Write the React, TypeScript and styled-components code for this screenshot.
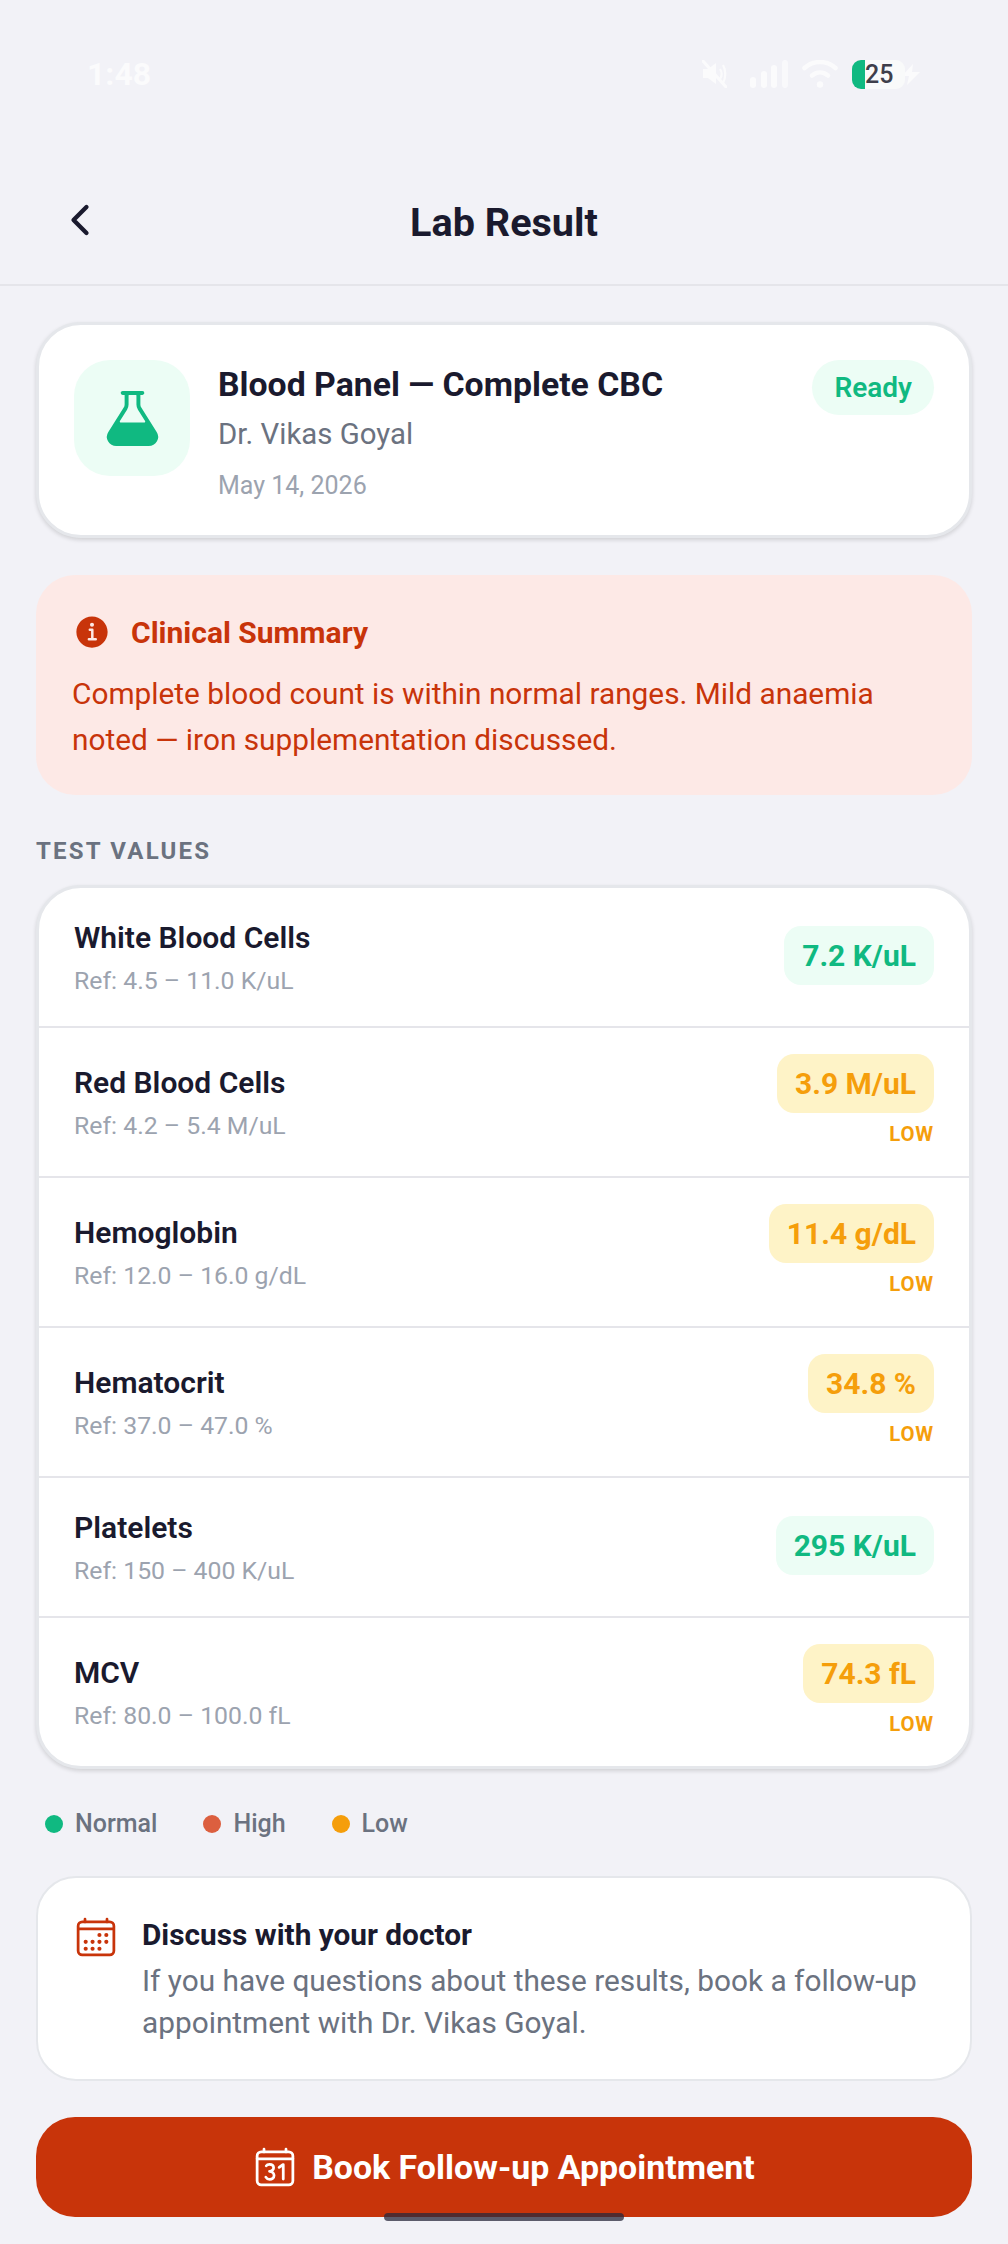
import React from "react";
import styled, { createGlobalStyle } from "styled-components";
import {
  IoCalendarNumberOutline,
  IoCalendarOutline,
  IoChevronBack,
  IoFlask,
  IoInformationCircle,
} from "react-icons/io5";

const GlobalStyle = createGlobalStyle`
  html, body {
    margin: 0;
    padding: 0;
    background: #f2f2f7;
  }
  * {
    box-sizing: border-box;
  }
`;

const GREEN = "#10b981";
const AMBER = "#f59e0b";
const RUST = "#c8340a";
const INK = "#1a1a2e";
const GRAY = "#6b7280";
const LIGHT = "#9ca3af";

const Screen = styled.div`
  position: relative;
  width: 1008px;
  height: 2244px;
  overflow: hidden;
  background: #f2f2f7;
  font-family: Roboto, "Liberation Sans", sans-serif;
`;

const StatusBar = styled.div`
  display: flex;
  align-items: center;
  justify-content: space-between;
  height: 148px;
  padding: 0 88px 0 87px;
`;

const Clock = styled.span`
  color: #fbfbfc;
  font-size: 32px;
  font-weight: 700;
`;

const StatusIcons = styled.div`
  display: flex;
  align-items: center;
  gap: 14px;
`;

const MuteSvg = styled.svg`
  margin-right: 9px;
`;

const BoltSvg = styled.svg`
  margin-left: -17px;
`;

const Battery = styled.div`
  position: relative;
  display: flex;
  align-items: center;
  width: 53px;
  height: 29px;
  border-radius: 9px;
  overflow: hidden;
  background: #f9fafa;
`;

const BatteryFill = styled.div`
  width: 13px;
  height: 100%;
  background: ${GREEN};
`;

const BatteryText = styled.span`
  color: #3f3f4b;
  font-size: 25px;
  font-weight: 500;
  line-height: 29px;
`;

const Header = styled.header`
  position: relative;
  display: flex;
  align-items: center;
  justify-content: center;
  height: 138px;
  padding-top: 13px;
  border-bottom: 2px solid #e5e5ea;
`;

const BackButton = styled.button`
  position: absolute;
  left: 57px;
  top: 49px;
  display: flex;
  padding: 0;
  border: none;
  background: none;
  color: ${INK};
`;

const Title = styled.h1`
  margin: 0;
  color: ${INK};
  font-size: 39.6px;
  font-weight: 700;
`;

const Content = styled.main`
  display: flex;
  flex-direction: column;
  padding: 36px 36px 0;
`;

const Card = styled.section`
  border: 3px solid #e5e7eb;
  border-radius: 45px;
  background: #fff;
  box-shadow: 0 2px 4px rgba(0, 0, 0, 0.14);
`;

const PanelCard = styled(Card)`
  display: flex;
  align-items: flex-start;
  height: 216px;
  padding: 35px;
`;

const IconBox = styled.div`
  display: flex;
  flex: none;
  align-items: center;
  justify-content: center;
  width: 116px;
  height: 116px;
  margin-right: 28px;
  border-radius: 36px;
  background: #ecfdf5;
  color: ${GREEN};
`;

const PanelInfo = styled.div`
  flex: 1;
  display: flex;
  flex-direction: column;
`;

const PanelName = styled.div`
  color: ${INK};
  font-size: 33.8px;
  font-weight: 700;
  line-height: 49px;
`;

const Doctor = styled.div`
  margin-top: 2px;
  color: ${GRAY};
  font-size: 29.4px;
  line-height: 46px;
`;

const PanelDate = styled.div`
  margin-top: 6px;
  color: ${LIGHT};
  font-size: 25px;
  line-height: 46px;
`;

const ReadyBadge = styled.span`
  padding: 0 22px;
  border-radius: 28px;
  background: #ecfdf5;
  color: ${GREEN};
  font-size: 28px;
  font-weight: 600;
  line-height: 55px;
`;

const Summary = styled.section`
  margin-top: 37px;
  padding: 37px 36px 36px;
  height: 220px;
  border-radius: 39px;
  background: #fde9e6;
  color: ${RUST};
`;

const SummaryHead = styled.div`
  display: flex;
  align-items: center;
  gap: 19px;
  margin-bottom: 19px;
  font-size: 30px;
  font-weight: 700;
`;

const SummaryText = styled.p`
  margin: 0;
  font-size: 29.8px;
  line-height: 46px;
`;

const SectionLabel = styled.h2`
  margin: 40px 0 18px;
  color: ${GRAY};
  font-size: 24px;
  font-weight: 700;
  line-height: 32px;
  letter-spacing: 2.2px;
`;

const TestList = styled(Card)`
  overflow: hidden;
`;

const TestRow = styled.div`
  display: flex;
  align-items: center;
  justify-content: space-between;
  padding: 28px 35px;
  border-bottom: 2px solid #e5e5ea;

  &:last-child {
    border-bottom: none;
  }
`;

const TestInfo = styled.div`
  padding-top: 2px;
  margin-bottom: -2px;
`;

const TestName = styled.div`
  color: ${INK};
  font-size: 30px;
  font-weight: 600;
  line-height: 40px;
`;

const TestRef = styled.div`
  margin-top: 4px;
  color: ${LIGHT};
  font-size: 24.8px;
  line-height: 38px;
`;

const ValueBlock = styled.div`
  display: flex;
  flex-direction: column;
  align-items: flex-end;
  margin-top: -2px;
  margin-bottom: 2px;
`;

const ValuePill = styled.span<{ $low: boolean }>`
  padding: 0 18px;
  border-radius: 17px;
  background: ${(p) => (p.$low ? "#fef3c7" : "#ecfdf5")};
  color: ${(p) => (p.$low ? AMBER : GREEN)};
  font-size: 30px;
  font-weight: 700;
  line-height: 59px;
`;

const LowTag = styled.span`
  margin-top: 8px;
  margin-bottom: -1px;
  color: ${AMBER};
  font-size: 20.4px;
  font-weight: 700;
  line-height: 26px;
  letter-spacing: 0.8px;
`;

const Legend = styled.div`
  display: flex;
  gap: 46px;
  margin-top: 38px;
  padding-left: 9px;
`;

const LegendItem = styled.div`
  display: flex;
  align-items: center;
  gap: 12px;
  color: ${GRAY};
  font-size: 25px;
  font-weight: 500;
  line-height: 34px;
`;

const Dot = styled.span<{ $color: string }>`
  width: 18px;
  height: 18px;
  border-radius: 50%;
  background: ${(p) => p.$color};
`;

const DiscussCard = styled.section`
  display: flex;
  gap: 24px;
  margin-top: 35px;
  height: 205px;
  padding: 37px 36px 35px;
  border: 2px solid #e5e7eb;
  border-radius: 40px;
  background: #fff;
  color: ${RUST};
`;

const DiscussIcon = styled(IoCalendarOutline)`
  flex: none;
`;

const DiscussTitle = styled.div`
  margin-bottom: 5px;
  color: ${INK};
  font-size: 29.8px;
  font-weight: 700;
  line-height: 40px;
`;

const DiscussText = styled.p`
  margin: 0;
  color: ${GRAY};
  font-size: 29.8px;
  line-height: 41.5px;
`;

const BookButton = styled.button`
  display: flex;
  align-items: center;
  justify-content: center;
  gap: 15px;
  width: 100%;
  height: 100px;
  margin-top: 36px;
  border: none;
  border-radius: 39px;
  background: ${RUST};
  color: #fff;
  font-family: inherit;
  font-size: 33.9px;
  font-weight: 700;
`;

const HomeBar = styled.div`
  position: absolute;
  left: 384px;
  bottom: 23px;
  width: 240px;
  height: 8px;
  border-radius: 4px;
  background: rgba(40, 40, 60, 0.75);
`;

const tests = [
  { name: "White Blood Cells", ref: "Ref: 4.5 – 11.0 K/uL", value: "7.2 K/uL", low: false },
  { name: "Red Blood Cells", ref: "Ref: 4.2 – 5.4 M/uL", value: "3.9 M/uL", low: true },
  { name: "Hemoglobin", ref: "Ref: 12.0 – 16.0 g/dL", value: "11.4 g/dL", low: true },
  { name: "Hematocrit", ref: "Ref: 37.0 – 47.0 %", value: "34.8 %", low: true },
  { name: "Platelets", ref: "Ref: 150 – 400 K/uL", value: "295 K/uL", low: false },
  { name: "MCV", ref: "Ref: 80.0 – 100.0 fL", value: "74.3 fL", low: true },
];

const legend = [
  { label: "Normal", color: GREEN },
  { label: "High", color: "#dc5f3f" },
  { label: "Low", color: AMBER },
];

const MuteIcon = () => (
  <MuteSvg width="25" height="28" viewBox="0 0 25 28" fill="none">
    <path d="M1 9h5l8-6v21l-8-6H1z" fill="#fbfbfc" />
    <path d="M18 9c2 3 2 7 0 10M21 5c3 5 3 13 0 18" stroke="#fbfbfc" strokeWidth="2.2" />
    <path d="M1 1l23 26" stroke="#fbfbfc" strokeWidth="3" strokeLinecap="round" />
  </MuteSvg>
);

const SignalIcon = () => (
  <svg width="38" height="28" viewBox="0 0 38 28" fill="#fbfbfc">
    <rect x="0" y="17" width="6" height="11" rx="3" />
    <rect x="11" y="11" width="6" height="17" rx="3" />
    <rect x="21" y="5" width="6" height="23" rx="3" />
    <rect x="32" y="0" width="6" height="28" rx="3" opacity="0.75" />
  </svg>
);

const WifiIcon = () => (
  <svg width="36" height="28" viewBox="0 0 36 28" fill="none" stroke="#fbfbfc" strokeLinecap="round">
    <path d="M2.5 8c9-8 22-8 31 0" strokeWidth="4.5" />
    <path d="M10 15.5c5-4 11-4 16 0" strokeWidth="4.5" />
    <circle cx="18" cy="24.5" r="3.2" fill="#fbfbfc" stroke="none" />
  </svg>
);

const BoltIcon = () => (
  <BoltSvg width="18" height="21" viewBox="0 0 18 21" fill="#fbfbfc">
    <path d="M11 0L0 12h7l-2 9 13-13h-8z" />
  </BoltSvg>
);

const App: React.FC = () => {
  return (
    <Screen>
      <GlobalStyle />
      <StatusBar>
        <Clock>1:48</Clock>
        <StatusIcons>
          <MuteIcon />
          <SignalIcon />
          <WifiIcon />
          <Battery>
            <BatteryFill />
            <BatteryText>25</BatteryText>
          </Battery>
          <BoltIcon />
        </StatusIcons>
      </StatusBar>

      <Header>
        <BackButton>
          <IoChevronBack size={46} />
        </BackButton>
        <Title>Lab Result</Title>
      </Header>

      <Content>
        <PanelCard>
          <IconBox>
            <IoFlask size={63} />
          </IconBox>
          <PanelInfo>
            <PanelName>Blood Panel — Complete CBC</PanelName>
            <Doctor>Dr. Vikas Goyal</Doctor>
            <PanelDate>May 14, 2026</PanelDate>
          </PanelInfo>
          <ReadyBadge>Ready</ReadyBadge>
        </PanelCard>

        <Summary>
          <SummaryHead>
            <IoInformationCircle size={40} />
            Clinical Summary
          </SummaryHead>
          <SummaryText>
            Complete blood count is within normal ranges. Mild anaemia noted — iron
            supplementation discussed.
          </SummaryText>
        </Summary>

        <SectionLabel>TEST VALUES</SectionLabel>
        <TestList>
          {tests.map((t) => (
            <TestRow key={t.name}>
              <TestInfo>
                <TestName>{t.name}</TestName>
                <TestRef>{t.ref}</TestRef>
              </TestInfo>
              <ValueBlock>
                <ValuePill $low={t.low}>{t.value}</ValuePill>
                {t.low && <LowTag>LOW</LowTag>}
              </ValueBlock>
            </TestRow>
          ))}
        </TestList>

        <Legend>
          {legend.map((l) => (
            <LegendItem key={l.label}>
              <Dot $color={l.color} />
              {l.label}
            </LegendItem>
          ))}
        </Legend>

        <DiscussCard>
          <DiscussIcon size={44} />
          <div>
            <DiscussTitle>Discuss with your doctor</DiscussTitle>
            <DiscussText>
              If you have questions about these results, book a follow-up appointment with Dr.
              Vikas Goyal.
            </DiscussText>
          </div>
        </DiscussCard>

        <BookButton>
          <IoCalendarNumberOutline size={44} />
          Book Follow-up Appointment
        </BookButton>
      </Content>
      <HomeBar />
    </Screen>
  );
};

export default App;
